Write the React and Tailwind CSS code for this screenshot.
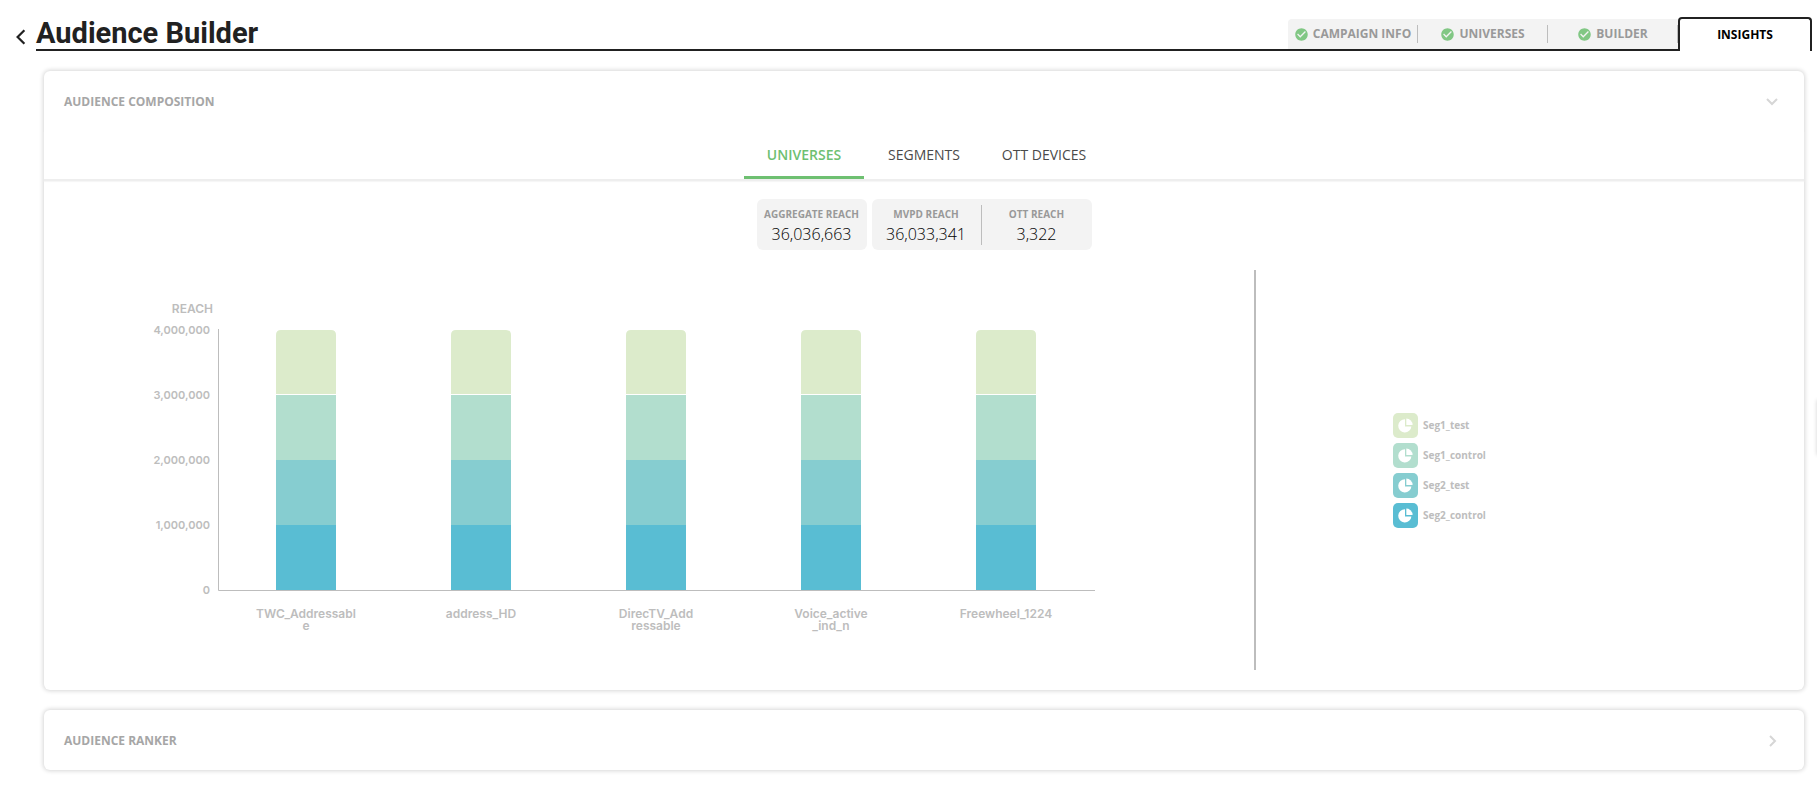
import React, { useState } from "react";
import { MdCheckCircle } from "react-icons/md";

const steps = ["Campaign info", "Universes", "Builder"];

const tabs = ["Universes", "Segments", "OTT Devices"];

const segments = [
  { name: "Seg1_test", color: "#dcebcb" },
  { name: "Seg1_control", color: "#b2dece" },
  { name: "Seg2_test", color: "#86cdd0" },
  { name: "Seg2_control", color: "#59bdd3" },
];

const universes = [
  ["TWC_Addressabl", "e"],
  ["address_HD"],
  ["DirecTV_Add", "ressable"],
  ["Voice_active", "_ind_n"],
  ["Freewheel_1224"],
];

const ticks = ["4,000,000", "3,000,000", "2,000,000", "1,000,000", "0"];

function Chevron({ d, className }) {
  return (
    <svg viewBox="0 0 16 16" fill="none" stroke="currentColor" strokeWidth="2" className={className}>
      <path d={d} />
    </svg>
  );
}

function Header() {
  return (
    <header className="flex pl-3 pr-[5px] pt-[17px]">
      <button type="button" aria-label="Back" className="w-6 h-[34px] flex items-center pt-1.5 text-[#212121]">
        <Chevron d="M11 2 L5 8 L11 14" className="w-[18px] h-[18px]" />
      </button>
      <div className="flex-1 flex h-[34px]">
        <h1 className="flex-1 border-b-2 border-[#212121] font-[Roboto] font-bold text-[29px] leading-8 text-[#212121]">
          Audience Builder
        </h1>
        <nav className="flex">
          <div className="flex mt-0.5 bg-[#f3f3f3] rounded-tl border-b-2 border-[#212121]">
            {steps.map((step) => (
              <a
                key={step}
                href="#"
                className="w-[130px] flex items-center text-xs font-bold uppercase text-[#999]"
              >
                <span className="flex-1 h-[18px] flex items-center justify-center gap-1 border-r border-[#bdbdbd]">
                  <MdCheckCircle className="w-[15px] h-[15px] text-[#81c784]" />
                  {step}
                </span>
              </a>
            ))}
          </div>
          <a
            href="#"
            aria-current="step"
            className="w-[134px] flex items-center justify-center border-2 border-b-0 border-[#212121] rounded-t text-xs font-bold uppercase text-black"
          >
            Insights
          </a>
        </nav>
      </div>
    </header>
  );
}

function Panel({ title, open, onToggle, children }) {
  return (
    <section className="bg-white rounded-md shadow-[0_0_4px_1px_rgba(0,0,0,0.16)]">
      <h2>
        <button
          type="button"
          aria-expanded={open}
          onClick={onToggle}
          className="w-full h-[60px] pt-0.5 pl-5 pr-6 flex items-center justify-between text-xs font-bold uppercase text-[#a6a6a6]"
        >
          {title}
          <Chevron
            d={open ? "M3 5 L8 10 L13 5" : "M6 3 L11 8 L6 13"}
            className="w-4 h-4 text-[#d6d6d6]"
          />
        </button>
      </h2>
      {open && children}
    </section>
  );
}

function Stat({ label, value }) {
  return (
    <div className="w-[110px] h-10 pt-px flex flex-col items-center">
      <dt className="text-[10px] leading-4 font-bold uppercase text-[#999]">{label}</dt>
      <dd className="text-base leading-6 font-light text-black">{value}</dd>
    </div>
  );
}

function ReachChart() {
  return (
    <svg
      viewBox="0 0 962 360"
      role="img"
      aria-label="Reach by universe"
      className="w-[962px] max-w-full font-[Inter] text-xs font-semibold"
      fill="#bdbdbd"
    >
      <text x="79" y="23" textAnchor="end">REACH</text>
      {ticks.map((tick, i) => (
        <text key={tick} x="76" y={44 + i * 65} textAnchor="end" className="text-[11px]">{tick}</text>
      ))}

      {universes.map((lines, i) => {
        const x = 142 + i * 175;
        return (
          <g key={lines[0]}>
            <path d={`M${x} 104 V45 q0 -5 5 -5 h50 q5 0 5 5 V104 z`} fill={segments[0].color} />
            {segments.slice(1).map((seg, j) => (
              <rect key={seg.name} x={x} y={105 + j * 65} width="60" height="65" fill={seg.color} />
            ))}
            <text textAnchor="middle">
              {lines.map((line, k) => (
                <tspan key={line} x={x + 30} y={328 + k * 12}>{line}</tspan>
              ))}
            </text>
          </g>
        );
      })}

      <path d="M84.5 39 V300.5 H961" fill="none" stroke="#bdbdbd" />
    </svg>
  );
}

function Legend() {
  return (
    <ul className="flex flex-col gap-[5px]">
      {segments.map((seg) => (
        <li key={seg.name} className="flex items-center gap-[5px] text-[10px] font-bold text-[#bdbdbd]">
          <svg viewBox="0 0 25 25" className="w-[25px] h-[25px]">
            <rect width="25" height="25" rx="5" fill={seg.color} />
            <path d="M12 6.3 A6.6 6.6 0 1 0 18.4 13.4 H12 z" fill="#fff" />
            <path d="M13.3 5.6 A6.4 6.4 0 0 1 19.6 12 H13.3 z" fill="#fff" />
          </svg>
          {seg.name}
        </li>
      ))}
    </ul>
  );
}

export default function App() {
  const [tab, setTab] = useState("Universes");
  const [open, setOpen] = useState({ composition: true, ranker: false });

  const toggle = (key) => setOpen((prev) => ({ ...prev, [key]: !prev[key] }));

  return (
    <div className="relative overflow-hidden min-h-screen bg-white font-['Open_Sans',sans-serif]">
      <Header />

      <main className="flex flex-col gap-5 pt-5 pl-11 pr-[13px] pb-6">
        <Panel
          title="Audience composition"
          open={open.composition}
          onToggle={() => toggle("composition")}
        >
          <div role="tablist" className="flex justify-center border-b-2 border-[#eee] shadow-[0_1px_1px_#f6f6f6]">
            {tabs.map((name) => (
              <button
                key={name}
                type="button"
                role="tab"
                aria-selected={tab === name}
                onClick={() => setTab(name)}
                className={
                  tab === name
                    ? "w-[120px] h-12 pt-0.5 border-b-3 border-[#6ec071] text-sm font-semibold uppercase text-[#6ec071]"
                    : "w-[120px] h-12 pt-0.5 border-b-3 border-transparent text-sm font-medium uppercase text-[#4a4a4a]"
                }
              >
                {name}
              </button>
            ))}
          </div>

          <dl className="flex justify-center gap-[5px] pt-[18px]">
            <div className="pt-1.5 pb-[5px] bg-[#f3f3f3] rounded-md">
              <Stat label="Aggregate reach" value="36,036,663" />
            </div>
            <div className="pt-1.5 pb-[5px] flex bg-[#f3f3f3] rounded-md divide-x divide-[#bdbdbd]">
              <Stat label="MVPD reach" value="36,033,341" />
              <Stat label="OTT reach" value="3,322" />
            </div>
          </dl>

          <div className="flex h-[400px] mt-5 mb-5">
            <div className="flex-1 pl-[90px] pt-5 border-r-2 border-[#bdbdbd]">
              <ReachChart />
            </div>
            <div className="w-[548px] flex items-center pl-[137px]">
              <Legend />
            </div>
          </div>
        </Panel>

        <Panel title="Audience ranker" open={open.ranker} onToggle={() => toggle("ranker")} />
      </main>

      {/* Drawer parked past the right edge, only its shadow shows */}
      <div className="absolute -right-10 top-[400px] w-10 h-[55px] shadow-[0_0_4px_rgba(0,0,0,0.18)]" />
    </div>
  );
}
